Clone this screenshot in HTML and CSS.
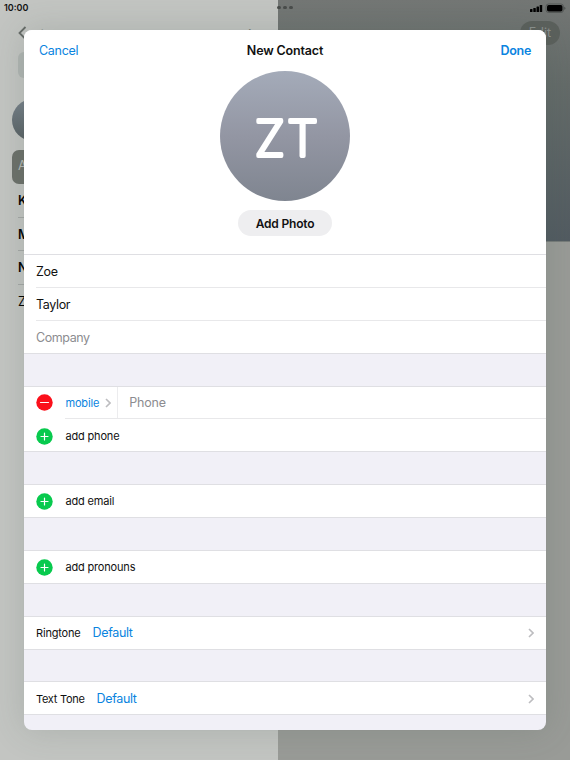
FILE: index.html
```html
<!DOCTYPE html>
<html lang="en">
<head>
<meta charset="utf-8">
<title>New Contact</title>
<link rel="stylesheet" href="styles.css">
</head>
<body>
<div class="screen">
  <aside class="sidebar">
    <div class="side-nav">
      <svg class="back" width="9" height="14" viewBox="0 0 9 14"><path d="M7.5 1 1.5 7l6 6"/></svg>
      <span class="lists">Lists</span><span class="side-title">Contacts</span><span class="side-add">+</span>
    </div>
    <div class="side-search"></div>
    <div class="side-card"></div>
    <div class="side-row selected">A</div>
    <div class="side-row bold">K</div>
    <div class="side-row bold">M</div>
    <div class="side-row bold">N</div>
    <div class="side-row last">Z</div>
  </aside>
  <main class="detail">
    <div class="poster"><span class="edit">Edit</span></div>
  </main>
</div>
<div class="shade"></div>
<header class="status">
  <span>10:00</span>
  <span class="dots"><i></i><i></i><i></i></span>
  <svg width="36" height="10" viewBox="0 0 36 10">
    <rect x="0" y="6" width="2.5" height="3" rx=".6"/><rect x="3.3" y="5" width="2.5" height="4" rx=".6"/><rect x="6.5" y="3.5" width="2.5" height="5.5" rx=".6"/><rect x="9.7" y="2" width="2.5" height="7" rx=".6"/>
    <rect class="cell" x="16" y="1" width="17.5" height="8.5" rx="2.6"/><rect x="17" y="2" width="15.5" height="6.5" rx="1.7"/><path class="tip" d="M34.2 3.8q1.2.3 1.2 1.5t-1.2 1.5z"/>
  </svg>
</header>
<section class="modal">
  <div class="top">
    <nav class="bar"><span class="cancel">Cancel</span><h1>New Contact</h1><span class="done">Done</span></nav>
    <svg class="avatar" width="130" height="130" viewBox="0 0 130 130">
      <defs><linearGradient id="g" x1="0" y1="0" x2="0" y2="1"><stop offset="0" stop-color="#a4abb9"/><stop offset=".5" stop-color="#9396a3"/><stop offset="1" stop-color="#7f8590"/></linearGradient></defs>
      <circle cx="65" cy="65" r="65" fill="url(#g)"/>
      <text x="34.8" y="84.6">Z</text><text x="67.2" y="84.6">T</text>
    </svg>
    <button class="photo">Add Photo</button>
  </div>
  <div class="row edge">Zoe</div>
  <div class="row inset">Taylor</div>
  <div class="row inset hint">Company</div>
  <div class="gap"></div>
  <div class="row edge small">
    <svg class="badge red" width="17" height="17" viewBox="0 0 17 17"><circle cx="8.5" cy="8.5" r="8.2"/><path d="M4.5 8.5h8"/></svg>
    <span class="mobile">mobile</span>
    <svg class="chev" width="6" height="10" viewBox="0 0 6 10"><path d="m1 1 4 4-4 4"/></svg>
    <span class="phone">Phone</span>
  </div>
  <div class="row inset deep small"><svg class="badge" width="17" height="17" viewBox="0 0 17 17"><circle cx="8.5" cy="8.5" r="8.2"/><path d="M5 8.5h7m-3.5-3.5v7"/></svg>add phone</div>
  <div class="gap"></div>
  <div class="row edge small"><svg class="badge" width="17" height="17" viewBox="0 0 17 17"><circle cx="8.5" cy="8.5" r="8.2"/><path d="M5 8.5h7m-3.5-3.5v7"/></svg>add email</div>
  <div class="gap"></div>
  <div class="row edge small"><svg class="badge" width="17" height="17" viewBox="0 0 17 17"><circle cx="8.5" cy="8.5" r="8.2"/><path d="M5 8.5h7m-3.5-3.5v7"/></svg>add pronouns</div>
  <div class="gap"></div>
  <div class="row edge small"><span>Ringtone</span><span class="value">Default</span><svg class="chev end" width="6" height="10" viewBox="0 0 6 10"><path d="m1 1 4 4-4 4"/></svg></div>
  <div class="gap"></div>
  <div class="row edge small tone"><span>Text Tone</span><span class="value">Default</span><svg class="chev end" width="6" height="10" viewBox="0 0 6 10"><path d="m1 1 4 4-4 4"/></svg></div>
  <div class="gap"></div>
</section>
</body>
</html>
```
FILE: styles.css
```css
* { box-sizing: border-box; }
body { margin: 0; width: 570px; height: 760px; overflow: hidden; position: relative; font-family: Inter, "Liberation Sans", sans-serif; color: #000; }
.screen { display: flex; width: 570px; height: 760px; }
.sidebar { width: 278px; background: #c3c5c2; padding-left: 12px; font-size: 12.5px; }
.side-nav { display: flex; margin: 26px 0 0 6px; height: 26px; position: relative; color: #6b706d; }
.back { fill: none; stroke: #666b68; stroke-width: 1.8; }
.lists { margin-left: 7px; padding-top: 1px; font-size: 12px; }
.side-title { margin-left: 53px; padding-top: 1px; font-size: 12px; font-weight: 600; color: #222; }
.side-add { margin-left: 78px; font-size: 19px; line-height: 14px; }
.side-search { width: 200px; height: 26px; margin-left: 6px; border-radius: 6px; background: #b0b5b2; }
.side-card { width: 42px; height: 42px; margin-top: 21px; border-radius: 50%; background: linear-gradient(#77818a, #586063); }
.side-row { height: 33.7px; line-height: 33px; margin-left: 6px; border-bottom: 1px solid #a5a8a6; }
.side-row.selected { height: 34px; line-height: 32px; margin: 9px 0 0; padding-left: 6px; border: 0; border-radius: 7px; background: #6c706a; color: #b6bab7; }
.side-row.bold { font-weight: 600; }
.side-row.last { border: 0; }
.detail { flex: 1; background: #999b97; }
.poster { height: 242px; padding: 21px 10px 0 0; text-align: right; background: linear-gradient(#747775, #646b69 35%, #525b61); border-bottom: 1px solid #777c7a; }
.edit { display: inline-block; width: 40px; height: 24px; line-height: 24px; border-radius: 12px; background: #5b605c; color: #8c918e; text-align: center; font-size: 12.5px; }
.shade { position: absolute; left: 24px; top: 30px; width: 522px; height: 700px; border-radius: 8px; box-shadow: 0 0 35px rgba(72, 89, 78, .2); }
.status { position: absolute; left: 0; top: 0; width: 570px; height: 15px; padding: 0 4px 0 4px; display: flex; align-items: center; justify-content: space-between; font-size: 9px; font-weight: 600; color: #111; }
.status > span:first-child { width: 36px; }
.dots { display: flex; gap: 2.2px; }
.dots i { width: 3.8px; height: 3.8px; border-radius: 50%; background: #484c4a; }
.cell { fill: none; stroke: #4d514f; stroke-width: .8; }
.tip { fill: #4d514f; }
.modal { position: absolute; left: 24px; top: 30px; width: 522px; height: 700px; overflow: hidden; border-radius: 8px; background: #f1f0f7; }
.top { height: 224px; background: #fff; display: flex; flex-direction: column; align-items: center; }
.bar { align-self: stretch; height: 41px; padding: 0 15px; display: grid; grid-template-columns: 1fr auto 1fr; align-items: center; font-size: 12.5px; color: #0a84e0; letter-spacing: -.3px; }
.bar h1 { margin: 0; font-size: 12.5px; font-weight: 600; color: #111; letter-spacing: -.17px; }
.done { text-align: right; font-weight: 600; }
.avatar { flex: none; }
.avatar text { font-family: Inter, sans-serif; font-size: 49px; font-weight: 200; fill: #fff; stroke: #fff; stroke-width: 3.8; stroke-linejoin: round; stroke-linecap: round; }
.photo { margin-top: 9px; width: 94px; height: 26px; border: 0; border-radius: 13px; padding: 0; background: #eeeef0; color: #111; font: 600 12px Inter, sans-serif; letter-spacing: -.2px; }
.row { height: 32.89px; padding: 1.5px 12px 0; display: flex; align-items: center; background: #fff; font-size: 12.5px; color: #111; letter-spacing: -.35px; }
.edge { border-top: 1px solid #dfdfe3; padding-top: .5px; }
.inset { background: linear-gradient(#e8e8ea, #e8e8ea) 12px 0 / 100% 1px no-repeat #fff; padding-top: 2.5px; }
.inset.deep { background-position: 41px 0; }
.row.hint { color: #8c8c90; letter-spacing: -.42px; }
.gap { height: 32.89px; border-top: 1px solid #dfdfe3; }
.row.small { font-size: 11px; letter-spacing: -.18px; }
.row.tone { letter-spacing: -.28px; }
.badge { margin-right: 12.5px; flex: none; }
.badge circle { fill: #08ca4e; }
.badge.red circle { fill: #fb101b; }
.badge path { fill: none; stroke: #fff; stroke-width: 1.2; stroke-linecap: round; }
.mobile, .value { color: #0a84e0; }
.chev { margin-left: 6px; fill: none; stroke: #bdbdc0; stroke-width: 1.6; }
.chev.end { margin: 0 0 0 auto; }
.phone { margin-left: 6px; padding-left: 11px; align-self: stretch; display: flex; align-items: center; border-left: 1px solid #ececee; color: #8c8c90; font-size: 12.5px; }
.value { margin-left: 12px; font-size: 12.5px; letter-spacing: -.35px; }
```
